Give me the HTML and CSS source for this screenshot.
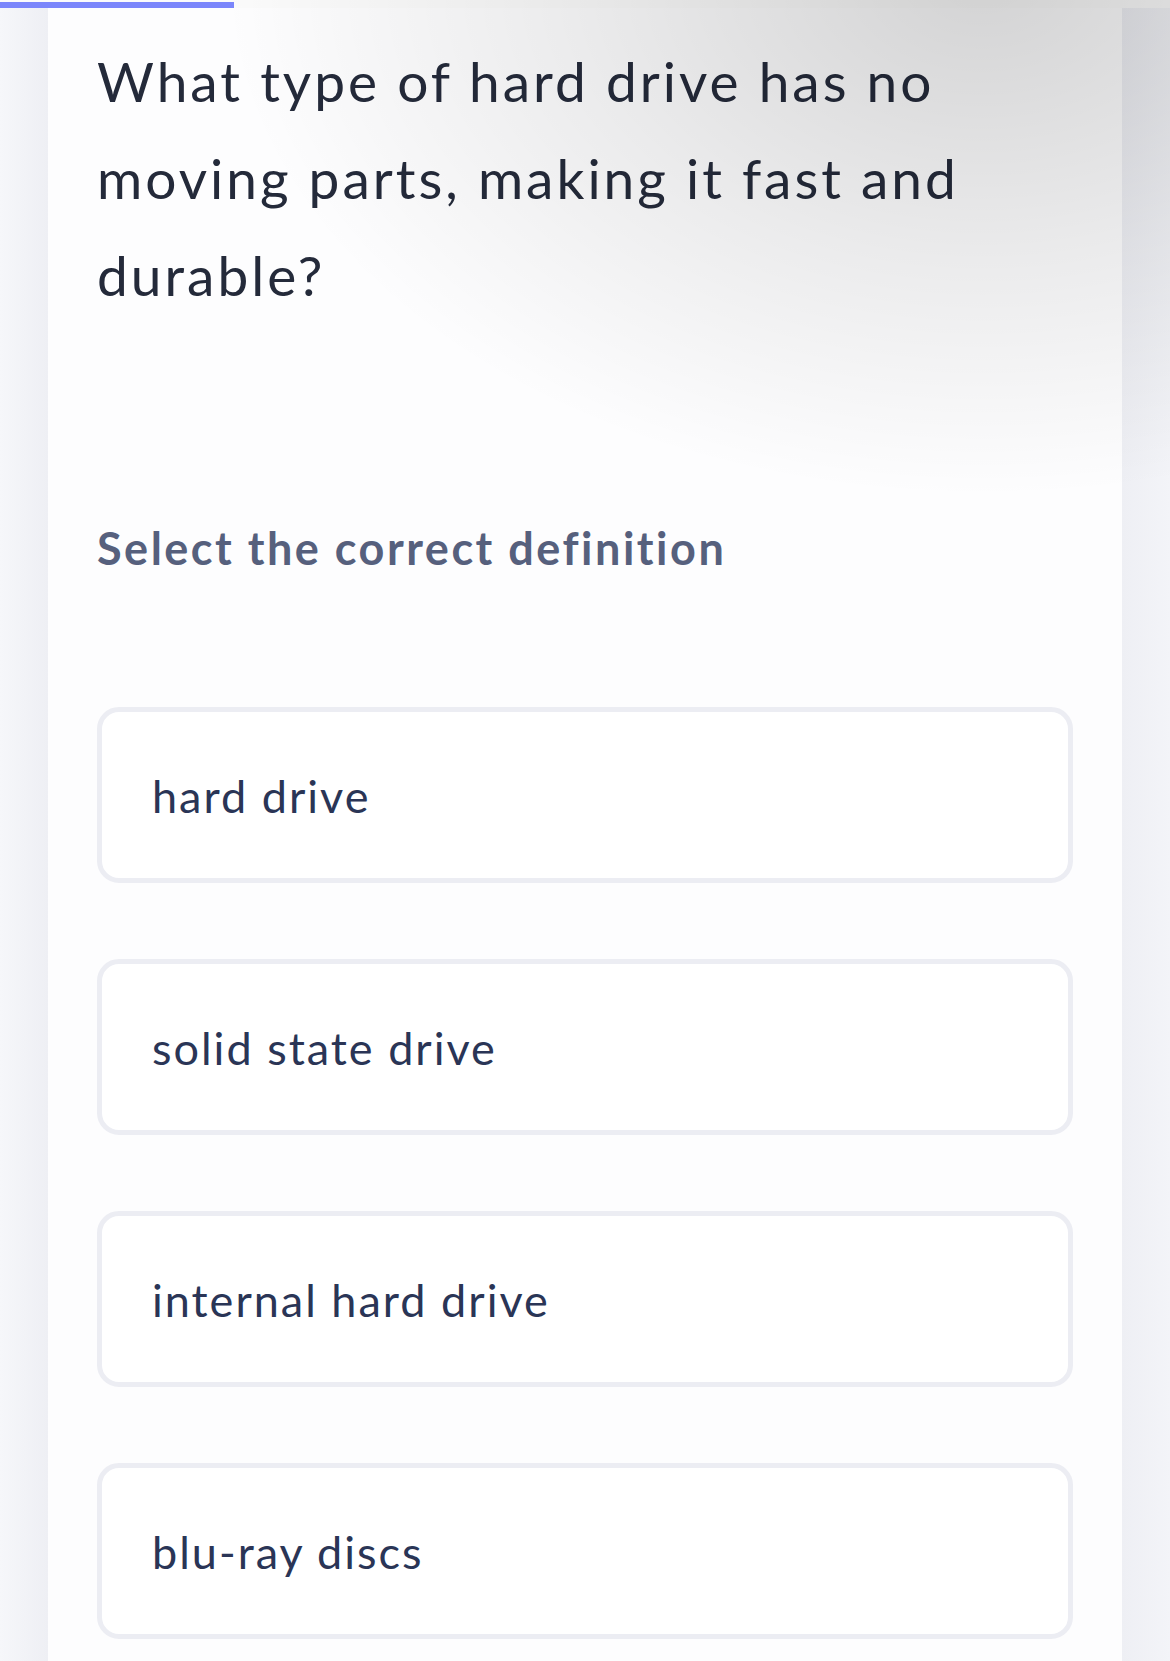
FILE: index.html
```html
<!DOCTYPE html>
<html lang="en">
<head>
<meta charset="utf-8">
<title>Quiz</title>
<link rel="stylesheet" href="styles.css">
</head>
<body>
<div class="page">
  <div class="progress"><div class="progress-bar"></div></div>
  <div class="layout">
    <div class="side side-left"></div>
    <main class="card">
      <h1 class="question">What type of hard drive has no moving parts, making it fast and durable?</h1>
      <h2 class="prompt">Select the correct definition</h2>
      <div class="options">
        <div class="option">hard drive</div>
        <div class="option">solid state drive</div>
        <div class="option">internal hard drive</div>
        <div class="option">blu-ray discs</div>
      </div>
    </main>
    <div class="side side-right"></div>
  </div>
  <div class="shade"></div>
</div>
</body>
</html>
```
FILE: styles.css
```css
* { box-sizing: border-box; }
html, body { margin: 0; padding: 0; }
body {
  background: #f3f4f8;
  font-family: Lato, "Open Sans", sans-serif;
  width: 1170px;
  height: 1661px;
  overflow: hidden;
}
.page {
  position: relative;
  width: 1170px;
  height: 1661px;
  display: flex;
  flex-direction: column;
}
.progress {
  height: 8px;
  padding-top: 2px;
  background: #fbfbfb;
}
.progress-bar {
  width: 234px;
  height: 6px;
  background: #7b86fb;
}
.layout {
  flex: 1;
  display: flex;
}
.side { width: 48px; }
.side-left { background: linear-gradient(to right, #f6f7fa, #eeeff4); }
.side-right { background: linear-gradient(to right, #eeeff4, #f3f4f8); }
.card {
  width: 1074px;
  background: #fdfdfe;
  padding: 25px 49px 0 49px;
}
.question {
  margin: 0;
  font-weight: 400;
  font-size: 55px;
  line-height: 97px;
  color: #242a3a;
  letter-spacing: 3px;
}
.prompt {
  margin: 196px 0 0 0;
  font-weight: 700;
  font-size: 45px;
  line-height: 56px;
  color: #56607d;
  letter-spacing: 2.5px;
}
.options {
  margin-top: 131px;
  display: flex;
  flex-direction: column;
  gap: 76px;
}
.option {
  height: 176px;
  border: 5px solid #ecedf3;
  border-radius: 22px;
  background: #ffffff;
  display: flex;
  align-items: center;
  padding: 2px 0 0 50px;
  font-size: 45px;
  color: #2a3556;
  letter-spacing: 2px;
}
.shade {
  position: absolute;
  left: 0;
  top: 0;
  width: 1170px;
  height: 560px;
  pointer-events: none;
  background: radial-gradient(ellipse 760px 520px at 84% -4%, rgba(0,0,0,0.17), rgba(0,0,0,0.07) 55%, rgba(0,0,0,0) 100%);
}
```
